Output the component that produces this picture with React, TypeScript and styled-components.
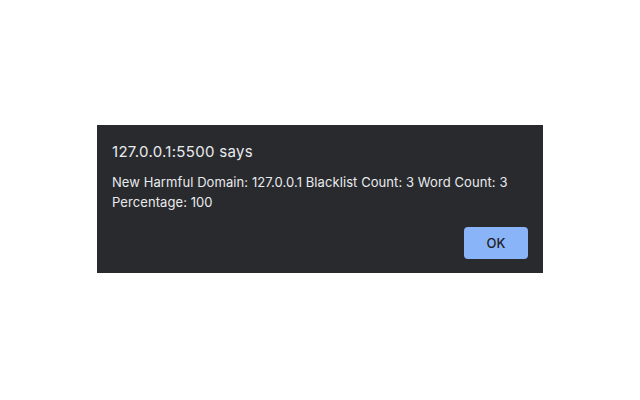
import styled, { createGlobalStyle } from "styled-components";

const GlobalStyle = createGlobalStyle`
  html, body {
    margin: 0;
    padding: 0;
    background: #ffffff;
  }
`;

const Page = styled.div`
  width: 640px;
  height: 400px;
  display: flex;
  justify-content: center;
  align-items: flex-start;
  padding-top: 125px;
  box-sizing: border-box;
`;

const Dialog = styled.div`
  width: 446px;
  height: 148px;
  box-sizing: border-box;
  background: #292a2d;
  padding: 18px 15px 14px 15px;
  display: flex;
  flex-direction: column;
  font-family: Inter, "Liberation Sans", Arial, sans-serif;
  color: #e8eaed;
`;

const Title = styled.div`
  font-size: 15px;
  line-height: 18px;
  letter-spacing: 0.3px;
  margin-bottom: 11px;
`;

const Message = styled.div`
  font-size: 13px;
  line-height: 20px;
  letter-spacing: 0.08px;
`;

const Actions = styled.div`
  margin-top: auto;
  display: flex;
  justify-content: flex-end;
`;

const Button = styled.button`
  width: 64px;
  height: 32px;
  border: none;
  border-radius: 4px;
  background: #8ab4f8;
  color: #202124;
  font-family: Inter, "Liberation Sans", Arial, sans-serif;
  font-size: 13px;
  font-weight: 500;
  cursor: pointer;
`;

export default function App() {
  return (
    <>
      <GlobalStyle />
      <Page>
        <Dialog>
          <Title>127.0.0.1:5500 says</Title>
          <Message>
            New Harmful Domain: 127.0.0.1 Blacklist Count: 3 Word Count: 3 Percentage: 100
          </Message>
          <Actions>
            <Button>OK</Button>
          </Actions>
        </Dialog>
      </Page>
    </>
  );
}
